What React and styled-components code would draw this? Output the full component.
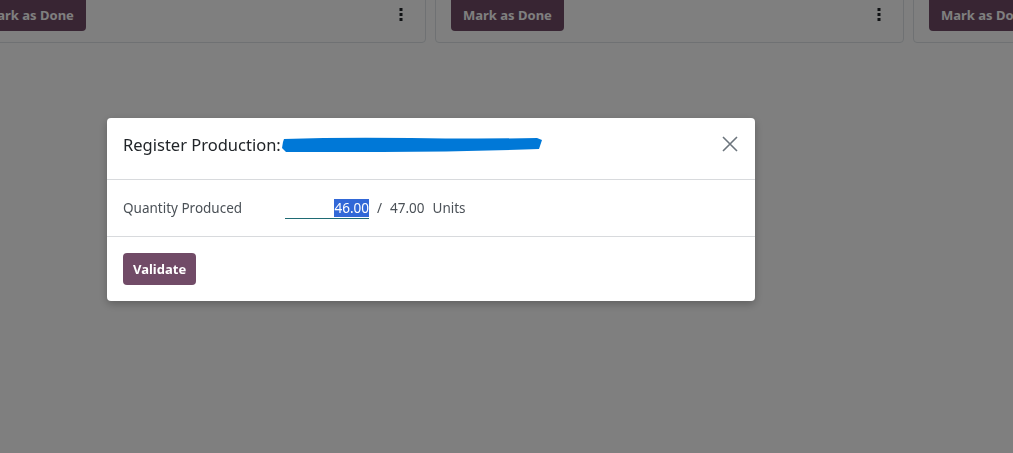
import React from 'react';
import styled, { createGlobalStyle } from 'styled-components';

const Global = createGlobalStyle`
  html, body {
    margin: 0;
    padding: 0;
    background: #ffffff;
    font-family: "Noto Sans", "Open Sans", sans-serif;
    overflow: hidden;
  }
`

const Page = styled.div`
  width: 1013px;
  height: 453px;
  overflow: hidden;
  background: #ffffff;
`

const CardRow = styled.div`
  display: flex;
  gap: 9px;
  margin-left: -43px;
  margin-top: -20px;
`

const Card = styled.div`
  flex: 0 0 469px;
  height: 63px;
  box-sizing: border-box;
  border: 1px solid #dee2e6;
  border-radius: 4px;
  background: #ffffff;
  display: flex;
  align-items: flex-start;
  justify-content: space-between;
  padding: 0 22px 0 15px;
`

const DoneButton = styled.button`
  height: 50px;
  padding: 18px 12px 0;
  border: none;
  border-radius: 4px;
  background: #714b67;
  color: #ffffff;
  font-family: "Noto Sans", "Open Sans", sans-serif;
  font-weight: 700;
  font-size: 13px;
`

const Dots = styled.svg`
  margin-top: 27px;
`

const Overlay = styled.div`
  position: fixed;
  inset: 0;
  background: rgba(0, 0, 0, 0.5);
  padding: 118px 0 0 107px;
`

const Dialog = styled.div`
  width: 648px;
  background: #ffffff;
  border-radius: 4px;
  box-shadow: 0 3px 8px rgba(0, 0, 0, 0.25);
`

const Header = styled.div`
  height: 62px;
  box-sizing: border-box;
  border-bottom: 1px solid #d8dadd;
  display: flex;
  align-items: center;
  justify-content: space-between;
  padding: 0 16px 8px;
`

const Title = styled.h4`
  margin: 0;
  font-size: 16.5px;
  font-weight: 400;
  color: #212529;
  display: flex;
  align-items: center;
`

const Close = styled.svg`
  margin-top: -1px;
  margin-right: 1px;
`

const Body = styled.div`
  height: 57px;
  box-sizing: border-box;
  border-bottom: 1px solid #d8dadd;
  display: flex;
  align-items: center;
  padding: 0 16px;
  font-size: 13.5px;
  color: #4b5157;
`

const Label = styled.div`
  width: 162px;
`

const Field = styled.div`
  width: 84px;
  border-bottom: 1px solid #1f6b74;
  text-align: right;
  line-height: 18px;
  padding-bottom: 1px;
  margin-top: 1px;
  color: #212529;
`

const Selected = styled.span`
  background: #3268d7;
  color: #ffffff;
`

const Rest = styled.div`
  display: flex;
  gap: 8px;
  margin-left: 8px;
`

const Footer = styled.div`
  height: 64px;
  display: flex;
  align-items: center;
  padding: 0 16px;
`

const Validate = styled.button`
  height: 32px;
  padding: 0 10px;
  border: none;
  border-radius: 4px;
  background: #714b67;
  color: #ffffff;
  font-family: "Noto Sans", "Open Sans", sans-serif;
  font-weight: 700;
  font-size: 13px;
`

function KebabIcon() {
  return (
    <Dots width="4" height="13" viewBox="0 0 4 13">
      <rect x="0.5" y="0" width="3" height="3" fill="#212529" />
      <rect x="0.5" y="5" width="3" height="3" fill="#212529" />
      <rect x="0.5" y="10" width="3" height="3" fill="#212529" />
    </Dots>
  );
}

function Redaction() {
  return (
    <svg width="262" height="18" viewBox="0 0 262 18">
      <path
        d="M3 3 Q60 1 130 2 T256 2 L261 4 L258 13 Q180 16 100 16 T5 16 L1 12 L2 6 Z"
        fill="#0078d7"
      />
    </svg>
  );
}

export default function App() {
  return (
    <>
      <Global />
      <Page>
        <CardRow>
          {[0, 1, 2].map((i) => (
            <Card key={i}>
              <DoneButton>Mark as Done</DoneButton>
              <KebabIcon />
            </Card>
          ))}
        </CardRow>
      </Page>
      <Overlay>
        <Dialog>
          <Header>
            <Title>
              Register Production:
              <Redaction />
            </Title>
            <Close width="16" height="16" viewBox="0 0 16 16">
              <path d="M1 1 L15 15 M15 1 L1 15" stroke="#6c757d" strokeWidth="1.6" />
            </Close>
          </Header>
          <Body>
            <Label>Quantity Produced</Label>
            <Field>
              <Selected>46.00</Selected>
            </Field>
            <Rest>
              <span>/</span>
              <span>47.00</span>
              <span>Units</span>
            </Rest>
          </Body>
          <Footer>
            <Validate>Validate</Validate>
          </Footer>
        </Dialog>
      </Overlay>
    </>
  );
}
